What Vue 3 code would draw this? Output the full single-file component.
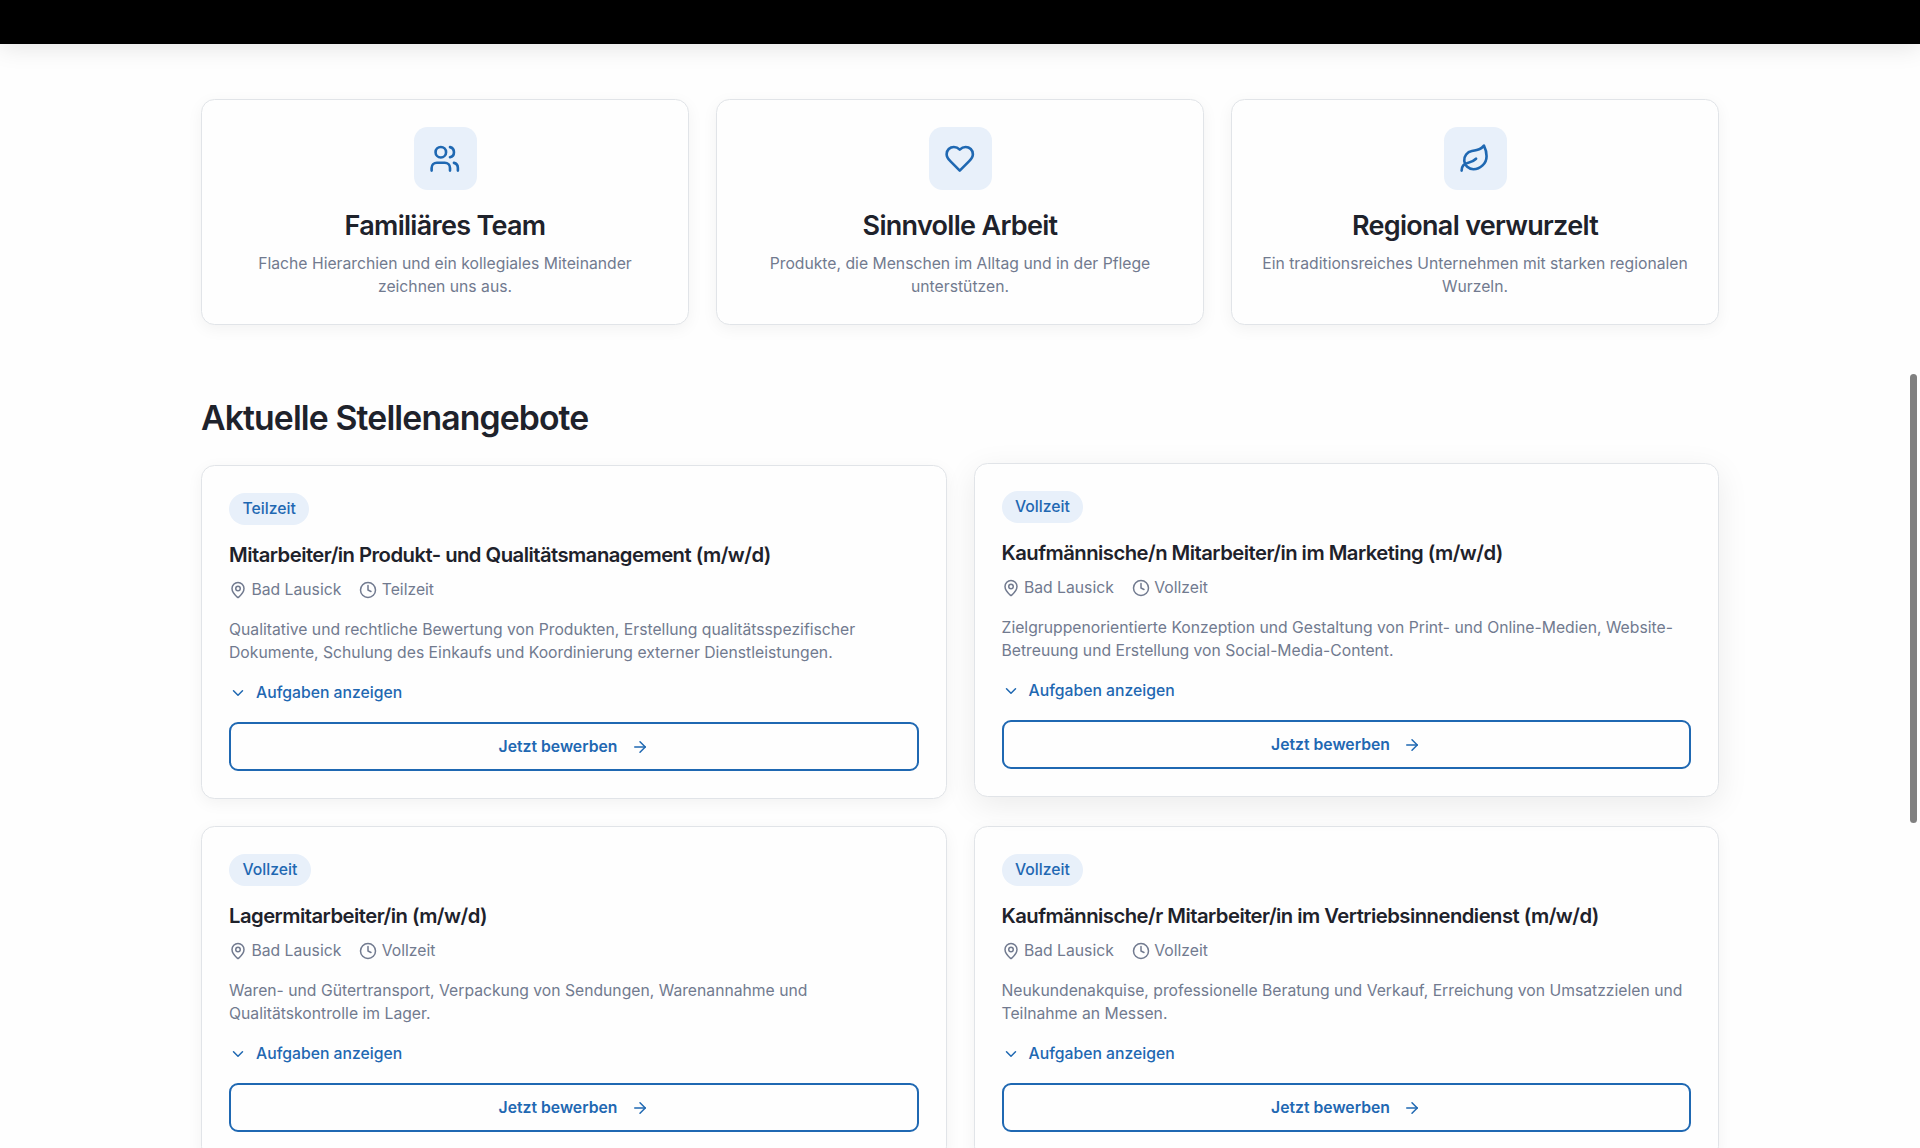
<template>
  <div class="page">
    <header class="topbar"></header>

    <main class="container">
      <section class="benefits">
        <article v-for="item in benefits" :key="item.title" class="card benefit">
          <div class="benefit-icon">
            <svg class="icon" viewBox="0 0 24 24">
              <path v-for="d in item.paths" :key="d" :d="d" />
            </svg>
          </div>
          <h3>{{ item.title }}</h3>
          <p>{{ item.text }}</p>
        </article>
      </section>

      <section class="jobs">
        <h2>Aktuelle Stellenangebote</h2>
        <div class="job-grid">
          <article
            v-for="job in jobs"
            :key="job.title"
            class="card job"
            :class="{ raised: job.raised }"
          >
            <span class="badge">{{ job.type }}</span>
            <h3>{{ job.title }}</h3>
            <div class="meta">
              <span>
                <svg class="icon" viewBox="0 0 24 24">
                  <path d="M20 10c0 4.993-5.539 10.193-7.399 11.799a1 1 0 0 1-1.202 0C9.539 20.193 4 14.993 4 10a8 8 0 0 1 16 0" />
                  <circle cx="12" cy="10" r="3" />
                </svg>
                {{ job.location }}
              </span>
              <span>
                <svg class="icon" viewBox="0 0 24 24">
                  <circle cx="12" cy="12" r="10" />
                  <path d="M12 6v6l4 2" />
                </svg>
                {{ job.type }}
              </span>
            </div>
            <p>{{ job.text }}</p>
            <button type="button" class="toggle">
              <svg class="icon" viewBox="0 0 24 24"><path d="m6 9 6 6 6-6" /></svg>
              Aufgaben anzeigen
            </button>
            <button type="button" class="apply">
              Jetzt bewerben
              <svg class="icon" viewBox="0 0 24 24">
                <path d="M5 12h14" />
                <path d="m12 5 7 7-7 7" />
              </svg>
            </button>
          </article>
        </div>
      </section>
    </main>

    <div class="scroll-thumb"></div>
  </div>
</template>

<script setup>
const benefits = [
  {
    title: "Familiäres Team",
    text: "Flache Hierarchien und ein kollegiales Miteinander zeichnen uns aus.",
    paths: [
      "M16 21v-2a4 4 0 0 0-4-4H6a4 4 0 0 0-4 4v2",
      "M9 3a4 4 0 1 0 0 8a4 4 0 1 0 0-8z",
      "M22 21v-2a4 4 0 0 0-3-3.87",
      "M16 3.13a4 4 0 0 1 0 7.75"
    ]
  },
  {
    title: "Sinnvolle Arbeit",
    text: "Produkte, die Menschen im Alltag und in der Pflege unterstützen.",
    paths: [
      "M19 14c1.49-1.46 3-3.21 3-5.5A5.5 5.5 0 0 0 16.5 3c-1.76 0-3 .5-4.5 2-1.5-1.5-2.74-2-4.5-2A5.5 5.5 0 0 0 2 8.5c0 2.3 1.5 4.05 3 5.5l7 7Z"
    ]
  },
  {
    title: "Regional verwurzelt",
    text: "Ein traditionsreiches Unternehmen mit starken regionalen Wurzeln.",
    paths: [
      "M11 20A7 7 0 0 1 9.8 6.1C15.5 5 17 4.48 19 2c1 2 2 4.18 2 8 0 5.5-4.78 10-10 10Z",
      "M2 21c0-3 1.85-5.36 5.08-6C9.5 14.52 12 13 13 12"
    ]
  }
];

const jobs = [
  {
    title: "Mitarbeiter/in Produkt- und Qualitätsmanagement (m/w/d)",
    type: "Teilzeit",
    location: "Bad Lausick",
    text: "Qualitative und rechtliche Bewertung von Produkten, Erstellung qualitätsspezifischer Dokumente, Schulung des Einkaufs und Koordinierung externer Dienstleistungen."
  },
  {
    title: "Kaufmännische/n Mitarbeiter/in im Marketing (m/w/d)",
    type: "Vollzeit",
    location: "Bad Lausick",
    text: "Zielgruppenorientierte Konzeption und Gestaltung von Print- und Online-Medien, Website-Betreuung und Erstellung von Social-Media-Content.",
    raised: true
  },
  {
    title: "Lagermitarbeiter/in (m/w/d)",
    type: "Vollzeit",
    location: "Bad Lausick",
    text: "Waren- und Gütertransport, Verpackung von Sendungen, Warenannahme und Qualitätskontrolle im Lager."
  },
  {
    title: "Kaufmännische/r Mitarbeiter/in im Vertriebsinnendienst (m/w/d)",
    type: "Vollzeit",
    location: "Bad Lausick",
    text: "Neukundenakquise, professionelle Beratung und Verkauf, Erreichung von Umsatzzielen und Teilnahme an Messen."
  }
];
</script>

<style>
html {
  font-size: 18px;
}

body {
  margin: 0;
  overflow: hidden;
  background: #fefefe;
}
</style>

<style scoped>
.page {
  height: 1148px;
  overflow: hidden;
  background: #fefefe;
  color: #1e222b;
  font-family: Inter, "Liberation Sans", sans-serif;
}

.topbar {
  height: 44px;
  background: #000;
  box-shadow: 0 4px 24px rgba(0, 0, 0, 0.1);
}

.container {
  width: 1518px;
  margin: 0 auto;
  padding-top: 55px;
}

.card {
  box-sizing: border-box;
  padding: 1.5rem;
  border: 1px solid #e1e4e8;
  border-radius: 0.75rem;
  background: #fefefe;
  box-shadow: 0 4px 16px rgba(0, 0, 0, 0.05);
}

.icon {
  display: block;
  flex-shrink: 0;
  width: 1rem;
  height: 1rem;
  fill: none;
  stroke: currentColor;
  stroke-width: 2;
  stroke-linecap: round;
  stroke-linejoin: round;
}

h2,
h3,
p {
  margin: 0;
}

h2,
h3 {
  font-weight: 600;
  line-height: 1.25;
  letter-spacing: -0.026em;
}

p {
  color: #717a8f;
  font-size: 0.874rem;
  line-height: 22.8px;
}

.benefits {
  display: grid;
  grid-template-columns: repeat(3, 1fr);
  gap: 1.5rem;
}

.benefit {
  display: flex;
  flex-direction: column;
  align-items: center;
  height: 226px;
  text-align: center;
}

.benefit-icon {
  display: flex;
  flex-shrink: 0;
  align-items: center;
  justify-content: center;
  width: 3.5rem;
  height: 3.5rem;
  margin-bottom: 1rem;
  border-radius: 0.75rem;
  background: #e8f0fa;
  color: #1f68b2;
}

.benefit-icon .icon {
  width: 31.5px;
  height: 31.5px;
}

.benefit h3 {
  margin-bottom: 0.5rem;
  font-size: 1.5rem;
  line-height: 35.8px;
}

.jobs {
  padding-top: 4rem;
}

.jobs h2 {
  margin-bottom: 26px;
  font-size: 1.875rem;
}

.job-grid {
  display: grid;
  grid-template-columns: repeat(2, 1fr);
  gap: 1.5rem;
}

.job {
  display: flex;
  flex-direction: column;
  align-items: flex-start;
}

.raised {
  transform: translateY(-2px);
  box-shadow: 0 8px 32px rgba(0, 0, 0, 0.08);
}

.badge {
  padding: 0.25rem 0.75rem;
  border-radius: 999px;
  background: #e8f0fa;
  color: #1f68b2;
  font-size: 0.875rem;
  font-weight: 500;
  line-height: 22.5px;
}

.job h3 {
  margin: 17.4px 0 9.9px;
  font-size: 1.125rem;
  line-height: 1.3;
}

.meta {
  display: flex;
  gap: 1rem;
  margin-bottom: 17.5px;
  color: #717a8f;
  font-size: 0.873rem;
  line-height: 23.2px;
}

.meta span {
  display: flex;
  align-items: center;
  gap: 0.25rem;
}

button {
  display: flex;
  align-items: center;
  border: none;
  background: none;
  color: #1f68b2;
  font-family: inherit;
  font-size: 0.875rem;
  line-height: 22.5px;
  cursor: pointer;
}

.toggle {
  gap: 0.5rem;
  margin: 17.2px 0 1rem;
  padding: 0;
  font-weight: 500;
}

.apply {
  justify-content: center;
  gap: 0.75rem;
  box-sizing: border-box;
  width: 100%;
  height: 49px;
  padding: 1px 0 0;
  border: 2px solid #1f68b2;
  border-radius: 0.5rem;
  font-weight: 600;
}

.scroll-thumb {
  position: fixed;
  top: 374px;
  right: 3px;
  width: 7px;
  height: 449px;
  border-radius: 4px;
  background: #808080;
}
</style>
